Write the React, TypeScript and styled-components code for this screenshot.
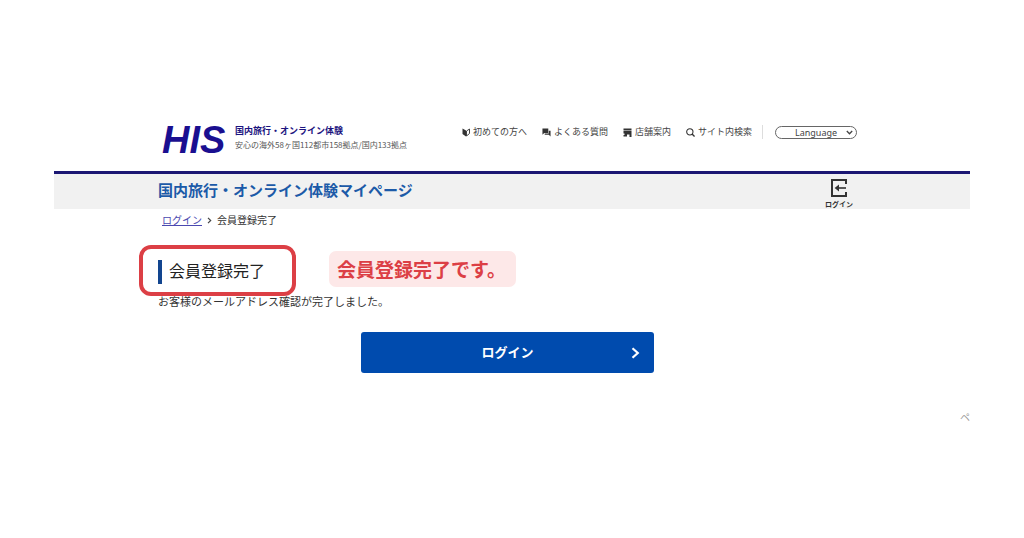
import React from 'react';
import styled, { createGlobalStyle } from 'styled-components';

const GlobalStyle = createGlobalStyle`
  *, *::before, *::after { box-sizing: border-box; }
  body {
    margin: 0;
    background: #fff;
    color: #333;
    font-family: "Noto Sans CJK JP", "Noto Sans", sans-serif;
    font-size: 11px;
    line-height: 16px;
  }
  h1, h2, p, ul, ol { margin: 0; padding: 0; }
  ul, ol { list-style: none; }
  a { color: inherit; text-decoration: none; }
`;

const Page = styled.div`
  padding: 118px 54px 114px;
`;

const Container = styled.div`
  max-width: 708px;
  margin: 0 auto;
`;

const HeaderRow = styled(Container)`
  display: flex;
  justify-content: space-between;
  align-items: flex-start;
  padding: 0 9px 0 4px;
  height: 53px;
`;

const Brand = styled.a`
  display: flex;
  gap: 10px;
`;

const Logo = styled.span`
  width: 63px;
  padding-top: 4px;
  color: #1a0f90;
  font: italic 700 38px/36px "Liberation Sans", sans-serif;
`;

const BrandText = styled.span`
  display: flex;
  flex-direction: column;
  padding-top: 6px;
  font-size: 8px;
  line-height: 14px;
  color: #555;
  white-space: nowrap;

  strong {
    font-size: 9px;
    line-height: 14px;
    color: #1c1480;
  }
`;

const Nav = styled.nav`
  display: flex;
  align-items: center;
  padding-top: 7px;
`;

const NavList = styled.ul`
  display: flex;
  gap: 15px;
  padding-right: 10px;
  border-right: 1px solid #ddd;
  line-height: 12px;
`;

const NavLink = styled.a`
  display: flex;
  align-items: center;
  gap: 3px;
  font-size: 9px;
  line-height: 14px;
  color: #444;
  white-space: nowrap;

  svg { display: block; margin-top: 1px; }
`;

const LanguageBox = styled.label`
  position: relative;
  display: block;
  margin-left: 12px;

  svg {
    position: absolute;
    right: 4px;
    top: 4px;
    pointer-events: none;
  }
`;

const LanguageSelect = styled.select`
  display: block;
  appearance: none;
  width: 82px;
  height: 13px;
  margin: 0;
  padding: 0 0 0 19px;
  border: 1px solid #666;
  border-radius: 7px;
  background: #fff;
  color: #444;
  font: 9px/11px "Noto Sans", sans-serif;
`;

const TitleBar = styled.div`
  border-top: 3px solid #1b1773;
  background: #f1f1f1;
`;

const TitleRow = styled(Container)`
  display: flex;
  justify-content: space-between;
  align-items: flex-start;
  height: 35px;
  padding-right: 13px;
`;

const PageTitle = styled.h1`
  padding-top: 6px;
  font-size: 15px;
  line-height: 20px;
  font-weight: 700;
  color: #1c5aa8;
`;

const HeaderLogin = styled.a`
  display: flex;
  flex-direction: column;
  align-items: center;
  gap: 2px;
  padding-top: 5px;
  font-size: 7px;
  line-height: 10px;
  font-weight: 700;
  color: #333;

  svg { display: block; }
`;

const Main = styled(Container)`
  padding-right: 9px;
`;

const Breadcrumb = styled.ol`
  display: flex;
  align-items: center;
  gap: 5px;
  padding: 3px 4px;
  font-size: 10px;
  line-height: 16px;

  a {
    color: #4a48b0;
    text-decoration: underline;
  }

  li { display: flex; align-items: center; gap: 5px; }
`;

const HeadingRow = styled.div`
  display: flex;
  align-items: flex-start;
  gap: 64px;
  margin-top: 20px;
`;

const Heading = styled.h2`
  position: relative;
  margin-top: 9px;
  padding: 0 0 4px 7px;
  border-left: 4px solid #12458f;
  font-size: 16px;
  line-height: 20px;
  font-weight: 400;
  color: #222;
`;

const Highlight = styled.span`
  position: absolute;
  inset: -15px -31px -12px -23px;
  border: 4px solid #dc3f45;
  border-radius: 12px;
`;

const Callout = styled.p`
  padding: 6px 10px 6px 8px;
  border-radius: 7px;
  background: #fde8e8;
  color: #dc3f45;
  font-size: 19px;
  line-height: 24px;
  font-weight: 700;
`;

const Message = styled.p`
  margin-top: 6px;
  font-size: 11px;
  line-height: 16px;
`;

const LoginButton = styled.button`
  display: grid;
  grid-template-columns: 1fr auto 1fr;
  align-items: center;
  width: 42%;
  min-width: 240px;
  height: 41px;
  margin: 23px auto 0;
  padding: 0 14px 2px;
  border: 0;
  border-radius: 3px;
  background: #004bae;
  color: #fff;
  font-family: inherit;
  font-size: 13px;
  line-height: 20px;
  font-weight: 700;

  span { grid-column: 2; }
  svg { justify-self: end; margin-top: 2px; }
`;

const PageTop = styled.a`
  display: block;
  margin-top: 36px;
  text-align: right;
  font-size: 10px;
  line-height: 16px;
  color: #999;
`;

const BeginnerIcon = () => (
  <svg width="8" height="9" viewBox="0 0 16 18" aria-hidden="true">
    <path d="M1 1l7 4v12l-7-5z" fill="#333" />
    <path d="M15 2l-6 4v10l6-5z" fill="#fff" stroke="#444" strokeWidth="2" />
  </svg>
);

const FaqIcon = () => (
  <svg width="9" height="9" viewBox="0 0 20 20" aria-hidden="true">
    <path d="M1 1h13v10H5l-4 4z" fill="#333" />
    <path d="M15 6h4v13l-4-4H6v-3h9z" fill="#333" />
  </svg>
);

const ShopIcon = () => (
  <svg width="9" height="9" viewBox="0 0 18 18" aria-hidden="true">
    <path d="M1 1h16v3H1zM1 5h16v13h-4v-5H8v4H1v-3h2v-3H1z" fill="#333" />
  </svg>
);

const SearchIcon = () => (
  <svg width="9" height="9" viewBox="0 0 20 20" fill="none" stroke="#333" strokeWidth="2.4" aria-hidden="true">
    <circle cx="8.5" cy="8.5" r="7" />
    <path d="M13.5 13.5l5.5 5.5" strokeWidth="3" />
  </svg>
);

const EnterIcon = () => (
  <svg width="16" height="18" viewBox="0 0 16 18" fill="none" stroke="#333" strokeWidth="2" aria-hidden="true">
    <path d="M15 5V1H1v16h14v-4" />
    <path d="M15 9H5" strokeWidth="1.6" />
    <path d="M8 5.6L3.6 9 8 12.4z" fill="#333" stroke="none" />
  </svg>
);

const navItems = [
  { label: '初めての方へ', icon: <BeginnerIcon /> },
  { label: 'よくある質問', icon: <FaqIcon /> },
  { label: '店舗案内', icon: <ShopIcon /> },
  { label: 'サイト内検索', icon: <SearchIcon /> },
];

export default function App() {
  return (
    <>
      <GlobalStyle />
      <Page lang="ja">
        <header>
          <HeaderRow>
            <Brand href="#">
              <Logo>HIS</Logo>
              <BrandText>
                <strong>国内旅行・オンライン体験</strong>
                <span>安心の海外58ヶ国112都市158拠点/国内133拠点</span>
              </BrandText>
            </Brand>
            <Nav>
              <NavList>
                {navItems.map((item) => (
                  <li key={item.label}>
                    <NavLink href="#">
                      {item.icon}
                      {item.label}
                    </NavLink>
                  </li>
                ))}
              </NavList>
              <LanguageBox>
                <LanguageSelect aria-label="Language" defaultValue="language">
                  <option value="language">Language</option>
                </LanguageSelect>
                <svg width="7" height="5" viewBox="0 0 7 5" fill="none" stroke="#444" strokeWidth="1.3" aria-hidden="true">
                  <path d="M.8 1l2.7 2.8L6.2 1" />
                </svg>
              </LanguageBox>
            </Nav>
          </HeaderRow>
          <TitleBar>
            <TitleRow>
              <PageTitle>国内旅行・オンライン体験マイページ</PageTitle>
              <HeaderLogin href="#">
                <EnterIcon />
                ログイン
              </HeaderLogin>
            </TitleRow>
          </TitleBar>
        </header>
        <Main as="main">
          <Breadcrumb>
            <li>
              <a href="#">ログイン</a>
              <svg width="5" height="7" viewBox="0 0 5 7" fill="none" stroke="#444" strokeWidth="1.2" aria-hidden="true">
                <path d="M1 .8l2.7 2.7L1 6.2" />
              </svg>
            </li>
            <li>会員登録完了</li>
          </Breadcrumb>
          <HeadingRow>
            <Heading>
              会員登録完了
              <Highlight />
            </Heading>
            <Callout>会員登録完了です。</Callout>
          </HeadingRow>
          <Message>お客様のメールアドレス確認が完了しました。</Message>
          <LoginButton type="button">
            <span>ログイン</span>
            <svg width="9" height="12" viewBox="0 0 9 12" fill="none" stroke="#fff" strokeWidth="2.2" aria-hidden="true">
              <path d="M1.5 1.2L6.8 6l-5.3 4.8" />
            </svg>
          </LoginButton>
        </Main>
        <PageTop href="#">ペ</PageTop>
      </Page>
    </>
  );
}
